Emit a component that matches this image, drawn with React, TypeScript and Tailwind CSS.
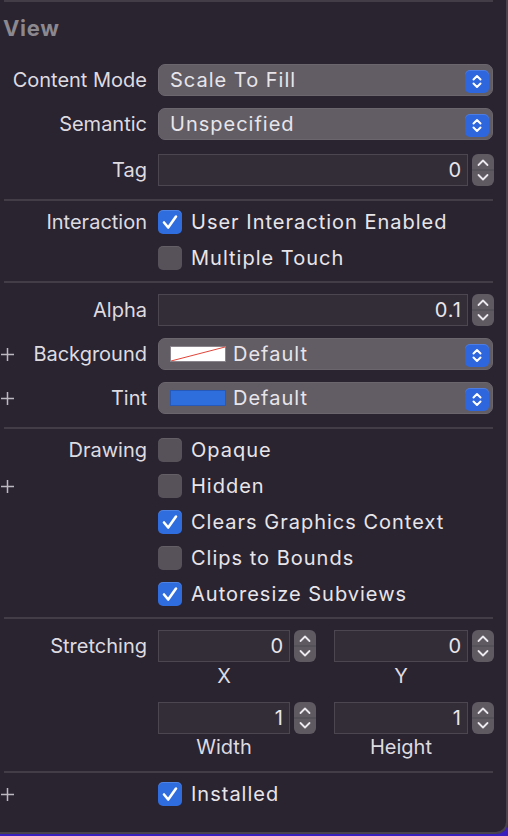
import React from 'react';

const font = { fontFamily: 'Inter, "Noto Sans", sans-serif' };

function Sep({ mt }: { mt: string }) {
  return <div className={`${mt} ml-[4px] w-[489px] h-[2px] bg-[#423d46]`} />;
}

function Plus() {
  return (
    <svg width="15" height="15" viewBox="0 0 15 15" className="shrink-0">
      <path d="M7.5 1v13M1 7.5h13" stroke="#bdb9c0" strokeWidth="1.5" />
    </svg>
  );
}

function Label({ text, plus }: { text?: string; plus?: boolean }) {
  return (
    <div className="w-[147px] shrink-0 flex items-center justify-between">
      <div className="w-[15px]">{plus && <Plus />}</div>
      {text && <span className="text-[#dedbe0] whitespace-nowrap tracking-normal">{text}</span>}
    </div>
  );
}

function PopupArrows() {
  return (
    <div className="absolute right-[3px] top-[5px] w-[24px] h-[23px] rounded-[5px] bg-[#2e66dd] flex items-center justify-center shadow-[inset_0_1px_0_rgba(255,255,255,0.15)]">
      <svg width="24" height="23" viewBox="0 0 24 23">
        <path d="M8.5 9.5L12 6L15.5 9.5M8.5 13.5L12 17L15.5 13.5" stroke="#fff" strokeWidth="2" fill="none" strokeLinecap="round" strokeLinejoin="round" />
      </svg>
    </div>
  );
}

function Popup({ value, swatch }: { value: string; swatch?: 'clear' | 'blue' }) {
  return (
    <div className="relative ml-[11px] w-[335px] h-[32px] rounded-[7px] bg-[#625d64] border border-[#6b666d] flex items-center pl-[11px] text-[#e8e5ea]">
      {swatch === 'clear' && (
        <svg width="56" height="16" viewBox="0 0 56 16" className="mr-[7px]">
          <rect x="0.5" y="0.5" width="55" height="15" fill="#fff" stroke="#8a858c" />
          <path d="M1 15L55 1" stroke="#e0453a" strokeWidth="1" />
        </svg>
      )}
      {swatch === 'blue' && (
        <div className="w-[56px] h-[16px] mr-[7px] bg-[#2e6ddc] border border-[#2759b8]" />
      )}
      <span>{value}</span>
      <PopupArrows />
    </div>
  );
}

function Stepper() {
  return (
    <div className="ml-[4px] w-[22px] h-[32px] rounded-[6px] bg-[#5f5a62] shrink-0 relative">
      <svg width="22" height="32" viewBox="0 0 22 32" className="absolute inset-0">
        <path d="M0 16H22" stroke="#4f4a53" strokeWidth="1" />
        <path d="M6.5 11L11 6.5L15.5 11M6.5 21L11 25.5L15.5 21" stroke="#ebe8ee" strokeWidth="1.8" fill="none" strokeLinecap="round" strokeLinejoin="round" />
      </svg>
    </div>
  );
}

function Field({ value, w }: { value: string; w: string }) {
  return (
    <div className={`${w} h-[32px] bg-[#332d38] border border-[#4b464f] flex items-center justify-end pr-[5px] text-[#e8e5ea]`}>
      {value}
    </div>
  );
}

function Check({ checked }: { checked?: boolean }) {
  if (checked) {
    return (
      <div className="w-[24px] h-[24px] rounded-[5px] bg-[#2f6ddf] shrink-0 flex items-center justify-center shadow-[inset_0_1px_0_rgba(255,255,255,0.15)]">
        <svg width="24" height="24" viewBox="0 0 24 24">
          <path d="M6 12.5L10.2 17.5L18 6.5" stroke="#fff" strokeWidth="2.6" fill="none" strokeLinecap="round" strokeLinejoin="round" />
        </svg>
      </div>
    );
  }
  return <div className="w-[24px] h-[24px] rounded-[5px] bg-[#57525a] shrink-0 shadow-[inset_0_1px_0_rgba(255,255,255,0.08)]" />;
}

function CheckRow({ mt, label, text, checked, plus }: { mt: string; label?: string; text: string; checked?: boolean; plus?: boolean }) {
  return (
    <div className={`${mt} h-[24px] flex items-center`}>
      <Label text={label} plus={plus} />
      <div className="ml-[11px] flex items-center">
        <Check checked={checked} />
        <span className="ml-[9px] text-[#e8e5ea] whitespace-nowrap">{text}</span>
      </div>
    </div>
  );
}

export default function App() {
  return (
    <div className="w-[508px] h-[836px] bg-[#3a1fbf] overflow-hidden text-[20px] leading-[24px] tracking-[0.05em]" style={font}>
      <div className="w-[508px] h-[834px] bg-[#2a2430] border-r-2 border-b-2 border-[#48434c] rounded-br-[12px] flex flex-col">
        <Sep mt="mt-0" />
        <div className="mt-[14px] ml-[3px] h-[24px] text-[22px] font-bold tracking-[0.03em] text-[#8c888f]">View</div>

        <div className="mt-[24px] h-[32px] flex items-center">
          <Label text="Content Mode" />
          <Popup value="Scale To Fill" />
        </div>
        <div className="mt-[12px] h-[32px] flex items-center">
          <Label text="Semantic" />
          <Popup value="Unspecified" />
        </div>
        <div className="mt-[14px] h-[32px] flex items-center">
          <Label text="Tag" />
          <div className="ml-[11px] flex">
            <Field value="0" w="w-[310px]" />
            <Stepper />
          </div>
        </div>

        <Sep mt="mt-[13px]" />
        <CheckRow mt="mt-[9px]" label="Interaction" text="User Interaction Enabled" checked />
        <CheckRow mt="mt-[12px]" text="Multiple Touch" />

        <Sep mt="mt-[11px]" />
        <div className="mt-[11px] h-[32px] flex items-center">
          <Label text="Alpha" />
          <div className="ml-[11px] flex">
            <Field value="0.1" w="w-[310px]" />
            <Stepper />
          </div>
        </div>
        <div className="mt-[12px] h-[32px] flex items-center">
          <Label text="Background" plus />
          <Popup value="Default" swatch="clear" />
        </div>
        <div className="mt-[12px] h-[32px] flex items-center">
          <Label text="Tint" plus />
          <Popup value="Default" swatch="blue" />
        </div>

        <Sep mt="mt-[13px]" />
        <CheckRow mt="mt-[9px]" label="Drawing" text="Opaque" />
        <CheckRow mt="mt-[12px]" text="Hidden" plus />
        <CheckRow mt="mt-[12px]" text="Clears Graphics Context" checked />
        <CheckRow mt="mt-[12px]" text="Clips to Bounds" />
        <CheckRow mt="mt-[12px]" text="Autoresize Subviews" checked />

        <Sep mt="mt-[11px]" />
        <div className="mt-[11px] h-[32px] flex items-center">
          <Label text="Stretching" />
          <div className="ml-[11px] flex">
            <Field value="0" w="w-[132px]" />
            <Stepper />
          </div>
          <div className="ml-[18px] flex">
            <Field value="0" w="w-[134px]" />
            <Stepper />
          </div>
        </div>
        <div className="mt-[2px] h-[24px] flex items-center text-[#dedbe0] tracking-normal">
          <div className="ml-[158px] w-[132px] text-center">X</div>
          <div className="ml-[44px] w-[134px] text-center">Y</div>
        </div>
        <div className="mt-[14px] h-[32px] flex items-center">
          <Label />
          <div className="ml-[11px] flex">
            <Field value="1" w="w-[132px]" />
            <Stepper />
          </div>
          <div className="ml-[18px] flex">
            <Field value="1" w="w-[134px]" />
            <Stepper />
          </div>
        </div>
        <div className="mt-[1px] h-[24px] flex items-center text-[#dedbe0] tracking-normal">
          <div className="ml-[158px] w-[132px] text-center">Width</div>
          <div className="ml-[44px] w-[134px] text-center">Height</div>
        </div>

        <Sep mt="mt-[12px]" />
        <CheckRow mt="mt-[9px]" text="Installed" checked plus />
      </div>
    </div>
  );
}
